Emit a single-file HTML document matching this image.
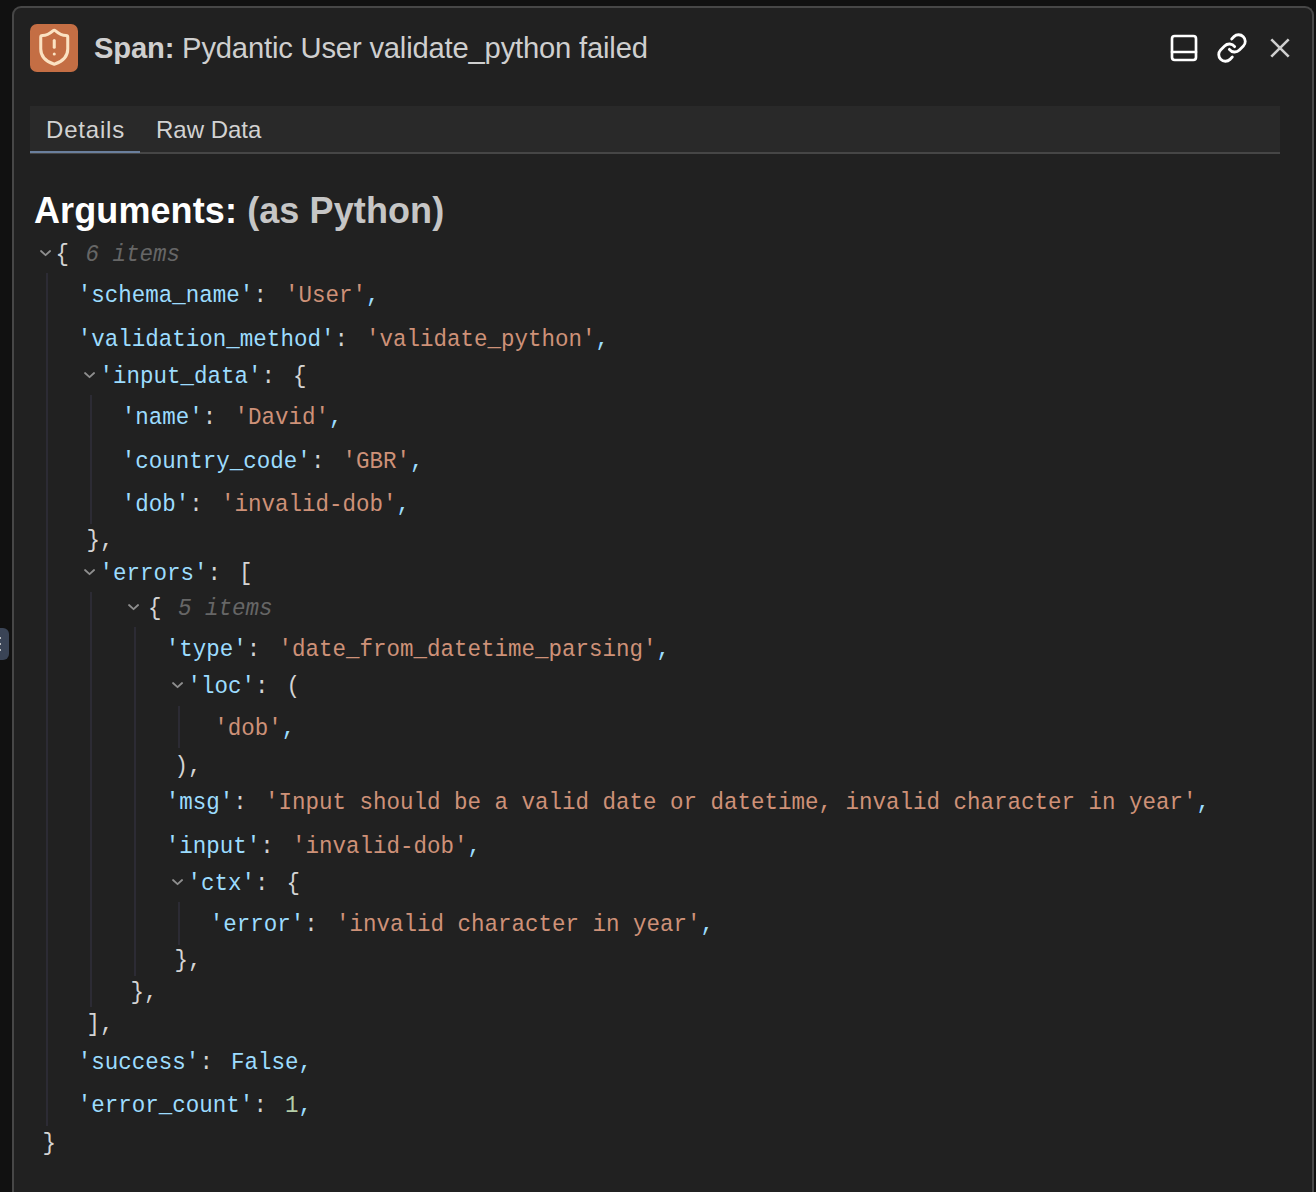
<!DOCTYPE html>
<html><head><meta charset="utf-8"><title>Span</title>
<style>
html,body{margin:0;padding:0;}
body{width:1316px;height:1192px;overflow:hidden;background:#111111;position:relative;font-family:"Liberation Sans",sans-serif;}
.panel{position:absolute;left:12px;top:6px;width:1298px;height:1200px;border:2px solid #474747;border-bottom:none;border-radius:9px 9px 0 0;background:#212121;}
.handle{position:absolute;left:-6px;top:628px;width:15px;height:32px;border-radius:6px;background:#3a4456;}
.handle i{position:absolute;left:5px;width:2px;height:2px;background:#e8e8e8;border-radius:1px;}
.icobox{position:absolute;left:30px;top:24px;width:48px;height:48px;border-radius:7px;background:#c46e44;}
.title{position:absolute;left:94px;top:30.2px;font-size:29.2px;line-height:36px;letter-spacing:-0.18px;color:#cfcfcf;white-space:pre;}
.title b{font-weight:700;}
.tabbar{position:absolute;left:30px;top:106px;width:1250px;height:46px;background:#292929;border-bottom:2px solid #464646;}
.tabact{position:absolute;left:30px;top:151px;width:110px;height:2px;background:#6a7f9d;}
.tab{position:absolute;top:114.7px;font-size:24px;line-height:30px;color:#d2d2d2;white-space:pre;}
.h2{position:absolute;left:34px;top:188.5px;font-size:36px;line-height:44px;letter-spacing:0.1px;font-weight:700;color:#ffffff;white-space:pre;}
.h2 span{color:#c6c6c6;}
.r{position:absolute;font-family:"Liberation Mono",monospace;font-size:22.5px;line-height:30px;white-space:pre;color:#d4d4d4;transform:scaleY(1.06);transform-origin:0 20.99px;}
.k{color:#9cdcfe;} .s{color:#ce9178;} .p{color:#d4d4d4;} .kc{color:#9cdcfe;} .n{color:#b5cea8;} .c{color:#666666;font-style:italic;margin-left:3px;}
.v{margin-left:4.5px;}
.chev{position:absolute;}
.g{position:absolute;width:2px;background:#2c2b34;}
svg{position:absolute;}
</style></head><body>
<div class="panel"></div>
<div class="handle"><i style="top:9px"></i><i style="top:15px"></i><i style="top:21px"></i></div>
<div class="icobox"></div>
<svg style="left:33.75px;top:27.25px" width="40.5" height="40.5" viewBox="0 0 24 24" fill="none" stroke="#fbe2c2" stroke-width="1.8" stroke-linecap="round" stroke-linejoin="round"><path d="M20 13c0 5-3.5 7.5-7.66 8.95a1 1 0 0 1-.67-.01C7.5 20.5 4 18 4 13V6a1 1 0 0 1 1-1c2 0 4.5-1.2 6.24-2.72a1.17 1.17 0 0 1 1.52 0C14.51 3.81 17 5 19 5a1 1 0 0 1 1 1z"/><path d="M12 8v4"/><path d="M12 16h.01"/></svg>
<div class="title"><b>Span:</b> Pydantic User validate_python failed</div>
<svg style="left:1168px;top:32px" width="32" height="32" viewBox="0 0 24 24" fill="none" stroke="#ffffff" stroke-width="2" stroke-linecap="round" stroke-linejoin="round"><rect width="18" height="18" x="3" y="3" rx="2"/><path d="M3 15h18"/></svg>
<svg style="left:1216px;top:32px" width="32" height="32" viewBox="0 0 24 24" fill="none" stroke="#ffffff" stroke-width="2.1" stroke-linecap="round" stroke-linejoin="round"><path d="M10 13a5 5 0 0 0 7.54.54l3-3a5 5 0 0 0-7.07-7.07l-1.72 1.71"/><path d="M14 11a5 5 0 0 0-7.54-.54l-3 3a5 5 0 0 0 7.07 7.07l1.71-1.71"/></svg>
<svg style="left:1264px;top:32px" width="32" height="32" viewBox="0 0 32 32" fill="none" stroke="#cfcfcf" stroke-width="2.6" stroke-linecap="butt"><path d="M7.3 7.3L24.7 24.7M24.7 7.3L7.3 24.7"/></svg>
<div class="tabbar"></div>
<div class="tabact"></div>
<div class="tab" style="left:46px;letter-spacing:0.8px">Details</div>
<div class="tab" style="left:156px">Raw Data</div>
<div class="h2">Arguments: <span>(as Python)</span></div>
<div class="g" style="left:46.15px;top:273.00px;height:853.00px"></div><div class="g" style="left:90.15px;top:395.30px;height:129.20px"></div><div class="g" style="left:90.15px;top:592.00px;height:415.00px"></div><div class="g" style="left:134.15px;top:627.00px;height:349.00px"></div><div class="g" style="left:178.15px;top:706.00px;height:42.00px"></div><div class="g" style="left:178.15px;top:902.00px;height:43.40px"></div>
<svg class="chev" style="left:38.60px;top:249.20px" width="13" height="9" viewBox="0 0 13 9"><path d="M2 2 L6.55 6.2 L11.1 2" fill="none" stroke="#8e8e8e" stroke-width="1.8" stroke-linecap="round" stroke-linejoin="round"/></svg><div class="r" style="left:55.55px;top:240.01px"><span class="p">{ </span><span class="c">6 items</span></div><div class="r" style="left:77.85px;top:280.81px"><span class="k">'schema_name'</span><span class="p">: </span><span class="v"><span class="s">'User'</span><span class="kc">,</span></span></div><div class="r" style="left:77.85px;top:324.61px"><span class="k">'validation_method'</span><span class="p">: </span><span class="v"><span class="s">'validate_python'</span><span class="kc">,</span></span></div><svg class="chev" style="left:82.60px;top:371.10px" width="13" height="9" viewBox="0 0 13 9"><path d="M2 2 L6.55 6.2 L11.1 2" fill="none" stroke="#8e8e8e" stroke-width="1.8" stroke-linecap="round" stroke-linejoin="round"/></svg><div class="r" style="left:99.55px;top:361.91px"><span class="k">'input_data'</span><span class="p">: </span><span class="v"><span class="p">{</span></span></div><div class="r" style="left:121.85px;top:402.81px"><span class="k">'name'</span><span class="p">: </span><span class="v"><span class="s">'David'</span><span class="kc">,</span></span></div><div class="r" style="left:121.85px;top:446.91px"><span class="k">'country_code'</span><span class="p">: </span><span class="v"><span class="s">'GBR'</span><span class="kc">,</span></span></div><div class="r" style="left:121.85px;top:489.81px"><span class="k">'dob'</span><span class="p">: </span><span class="v"><span class="s">'invalid-dob'</span><span class="kc">,</span></span></div><div class="r" style="left:86.45px;top:526.21px"><span class="p">},</span></div><svg class="chev" style="left:82.60px;top:568.10px" width="13" height="9" viewBox="0 0 13 9"><path d="M2 2 L6.55 6.2 L11.1 2" fill="none" stroke="#8e8e8e" stroke-width="1.8" stroke-linecap="round" stroke-linejoin="round"/></svg><div class="r" style="left:99.55px;top:558.91px"><span class="k">'errors'</span><span class="p">: </span><span class="v"><span class="p">[</span></span></div><svg class="chev" style="left:126.60px;top:602.90px" width="13" height="9" viewBox="0 0 13 9"><path d="M2 2 L6.55 6.2 L11.1 2" fill="none" stroke="#8e8e8e" stroke-width="1.8" stroke-linecap="round" stroke-linejoin="round"/></svg><div class="r" style="left:143.55px;top:593.71px"><span class="v"><span class="p">{ </span><span class="c">5 items</span></span></div><div class="r" style="left:165.85px;top:634.81px"><span class="k">'type'</span><span class="p">: </span><span class="v"><span class="s">'date_from_datetime_parsing'</span><span class="kc">,</span></span></div><svg class="chev" style="left:170.60px;top:681.10px" width="13" height="9" viewBox="0 0 13 9"><path d="M2 2 L6.55 6.2 L11.1 2" fill="none" stroke="#8e8e8e" stroke-width="1.8" stroke-linecap="round" stroke-linejoin="round"/></svg><div class="r" style="left:187.55px;top:671.91px"><span class="k">'loc'</span><span class="p">: </span><span class="v"><span class="p">(</span></span></div><div class="r" style="left:209.85px;top:713.71px"><span class="v"><span class="s">'dob'</span><span class="kc">,</span></span></div><div class="r" style="left:174.45px;top:751.51px"><span class="p">),</span></div><div class="r" style="left:165.85px;top:787.81px"><span class="k">'msg'</span><span class="p">: </span><span class="v"><span class="s">'Input should be a valid date or datetime, invalid character in year'</span><span class="kc">,</span></span></div><div class="r" style="left:165.85px;top:831.81px"><span class="k">'input'</span><span class="p">: </span><span class="v"><span class="s">'invalid-dob'</span><span class="kc">,</span></span></div><svg class="chev" style="left:170.60px;top:878.20px" width="13" height="9" viewBox="0 0 13 9"><path d="M2 2 L6.55 6.2 L11.1 2" fill="none" stroke="#8e8e8e" stroke-width="1.8" stroke-linecap="round" stroke-linejoin="round"/></svg><div class="r" style="left:187.55px;top:869.01px"><span class="k">'ctx'</span><span class="p">: </span><span class="v"><span class="p">{</span></span></div><div class="r" style="left:209.85px;top:909.71px"><span class="k">'error'</span><span class="p">: </span><span class="v"><span class="s">'invalid character in year'</span><span class="kc">,</span></span></div><div class="r" style="left:174.45px;top:946.31px"><span class="p">},</span></div><div class="r" style="left:130.45px;top:978.41px"><span class="p">},</span></div><div class="r" style="left:86.45px;top:1010.31px"><span class="p">],</span></div><div class="r" style="left:77.85px;top:1047.81px"><span class="k">'success'</span><span class="p">: </span><span class="v"><span class="k">False</span><span class="kc">,</span></span></div><div class="r" style="left:77.85px;top:1090.71px"><span class="k">'error_count'</span><span class="p">: </span><span class="v"><span class="n">1</span><span class="kc">,</span></span></div><div class="r" style="left:42.45px;top:1128.61px"><span class="p">}</span></div>
</body></html>
